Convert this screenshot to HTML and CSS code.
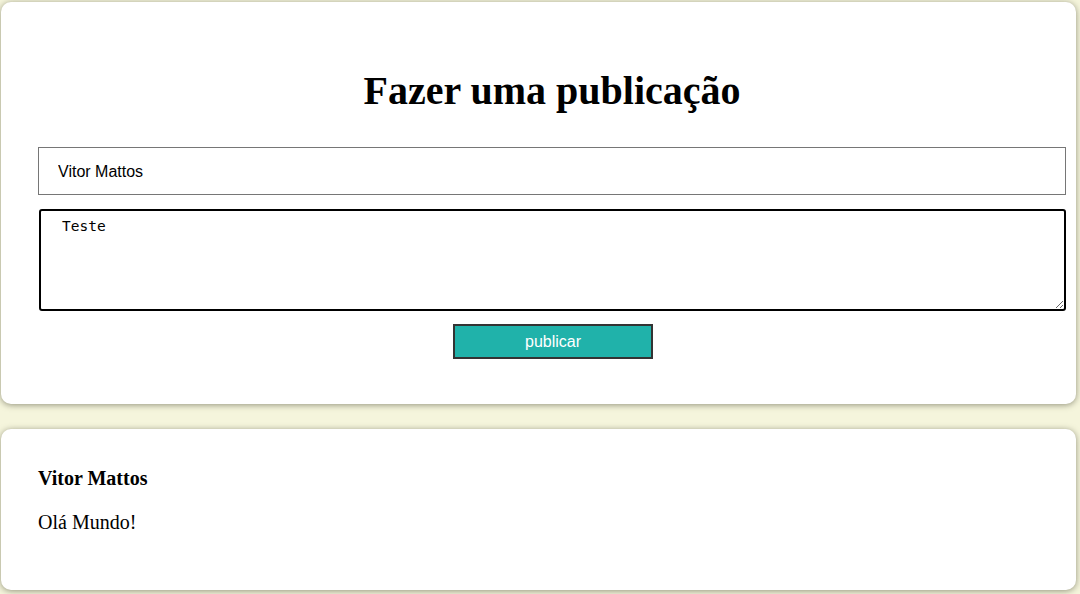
FILE: index.html
```html
<!DOCTYPE html>
<html lang="pt">
<head>
<meta charset="utf-8">
<title>Fazer uma publicação</title>
<link rel="stylesheet" href="styles.css">
</head>
<body>
<section class="card composer">
  <h1 class="title">Fazer uma publicação</h1>
  <form class="form">
    <input class="name-input" type="text" value="Vitor Mattos">
    <textarea class="message-input">Teste</textarea>
    <button class="submit" type="button">publicar</button>
  </form>
</section>
<section class="card post">
  <p class="post-author">Vitor Mattos</p>
  <p class="post-text">Olá Mundo!</p>
</section>
</body>
</html>
```

FILE: styles.css
```css
html, body {
  margin: 0;
  padding: 0;
}
body {
  background: #f5f5dc;
  font-family: "Liberation Serif", "Times New Roman", serif;
  color: #000;
  padding-top: 2px;
  height: 594px;
  overflow: hidden;
  box-sizing: border-box;
}
.card {
  background: #fff;
  border-radius: 10px;
  box-shadow: 0 1px 6px rgba(80, 80, 60, 0.6);
  margin: 0 4px 25px 1px;
  padding: 0 10px 0 37px;
}
.composer {
  padding-top: 66px;
  padding-bottom: 45px;
}
.title {
  margin: 0;
  font-size: 40px;
  font-weight: bold;
  text-align: center;
  line-height: 46px;
}
.form {
  display: flex;
  flex-direction: column;
  align-items: stretch;
  margin-top: 33px;
}
.name-input {
  box-sizing: border-box;
  height: 48px;
  border: 1px solid #767676;
  border-radius: 0;
  padding: 1px 19px 0;
  font-family: "Liberation Sans", Arial, sans-serif;
  font-size: 16px;
  color: #000;
  margin: 0;
}
.message-input {
  box-sizing: border-box;
  height: 102px;
  margin: 14px 0 0 1px;
  border: 2px solid #000;
  border-radius: 3px;
  outline: none;
  padding: 6px 21px;
  font-family: "DejaVu Sans Mono", monospace;
  font-size: 14.5px;
  line-height: 18px;
  color: #000;
  resize: vertical;
}
.submit {
  align-self: center;
  width: 200px;
  height: 35px;
  margin: 13px 0 0 2px;
  background: #20b2aa;
  border: 2px solid #333;
  color: #fff;
  font-family: "Liberation Sans", Arial, sans-serif;
  font-size: 16px;
  padding: 0;
}
.post {
  padding-top: 38px;
  padding-bottom: 56px;
}
.post-author {
  margin: 0;
  font-size: 20px;
  font-weight: bold;
  line-height: 23px;
}
.post-text {
  margin: 21px 0 0;
  font-size: 20px;
  line-height: 23px;
}
```
